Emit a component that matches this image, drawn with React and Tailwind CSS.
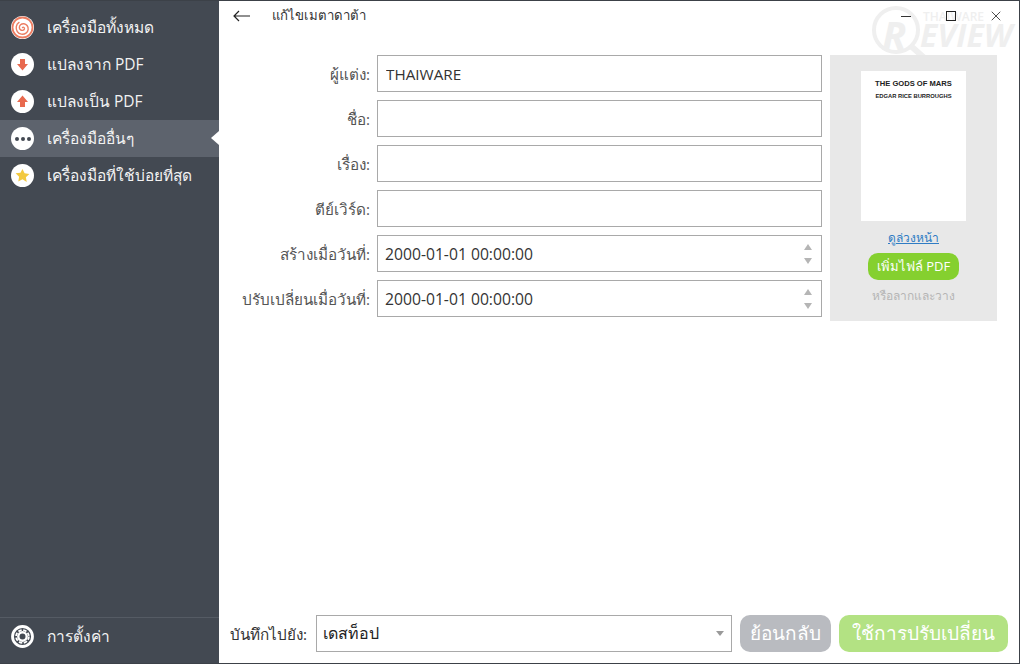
import { X } from "lucide-react";

const font = "font-['Open_Sans','Noto_Sans','Liberation_Sans',sans-serif]";

const CircleIcon = ({ children }) => (
  <span className="flex h-[23px] w-[23px] shrink-0 items-center justify-center rounded-full bg-white">
    {children}
  </span>
);

const menuItems = [
  {
    label: "เครื่องมือทั้งหมด",
    icon: (
      <span className="flex h-[23px] w-[23px] shrink-0 items-center justify-center rounded-full bg-white">
        <svg width="23" height="23" viewBox="0 0 23 23" fill="none" stroke="#ec7d62">
          <circle cx="11.5" cy="11.5" r="10" strokeWidth="1.800" />
          <path
            d="M11.500 11.500c.9-.9 2.300.2 1.900 1.500-.5 1.500-2.600 1.800-3.800.9-1.700-1.200-1.600-3.800-.1-5.100 2-1.700 5-1.300 6.600.7 1.900 2.400 1.300 5.900-1.100 7.600-2.800 2-6.800 1.300-8.700-1.500-2-3-1.300-7.200 1.700-9.200"
            strokeWidth="1.400"
            strokeLinecap="round"
          />
        </svg>
      </span>
    ),
  },
  {
    label: "แปลงจาก PDF",
    icon: (
      <CircleIcon>
        <svg width="13" height="13" viewBox="0 0 13 13" fill="#e8694e">
          <path d="M4 1h5v5h3l-5.500 6.500L1 6h3z" />
        </svg>
      </CircleIcon>
    ),
  },
  {
    label: "แปลงเป็น PDF",
    icon: (
      <CircleIcon>
        <svg width="13" height="13" viewBox="0 0 13 13" fill="#e8694e">
          <path d="M4 12h5V7h3L6.500.5 1 7h3z" />
        </svg>
      </CircleIcon>
    ),
  },
  {
    label: "เครื่องมืออื่นๆ",
    active: true,
    icon: (
      <CircleIcon>
        <span className="flex gap-[2px]">
          <span className="h-[4px] w-[4px] rounded-full bg-[#434952]" />
          <span className="h-[4px] w-[4px] rounded-full bg-[#434952]" />
          <span className="h-[4px] w-[4px] rounded-full bg-[#434952]" />
        </span>
      </CircleIcon>
    ),
  },
  {
    label: "เครื่องมือที่ใช้บ่อยที่สุด",
    icon: (
      <CircleIcon>
        <svg width="15" height="15" viewBox="0 0 24 24" fill="#f3c93f">
          <path d="M12 1.500l3.300 7 7.700 1-5.600 5.300 1.400 7.700L12 18l-6.800 3.500 1.400-7.700L1 8.500l7.700-1z" />
        </svg>
      </CircleIcon>
    ),
  },
];

const GearIcon = () => (
  <svg width="23" height="23" viewBox="0 0 23 23" fill="none" className="shrink-0">
    <circle cx="11.5" cy="11.5" r="10" stroke="#fff" strokeWidth="2.800" />
    <circle cx="11.5" cy="11.5" r="6.400" stroke="#fff" strokeWidth="1.800" strokeDasharray="3.400 1.620" />
    <circle cx="11.5" cy="11.5" r="4.200" stroke="#fff" strokeWidth="2.400" />
  </svg>
);

const TextRow = ({ label, value }) => (
  <div className="flex items-center">
    <label className="w-[150px] shrink-0 pt-[1px] text-right text-[15.25px] text-[#555]">{label}</label>
    <input
      readOnly
      value={value}
      className="ml-[7px] h-[37px] w-[445px] border border-[#a9a9a9] bg-white px-[8px] text-[15.25px] text-[#333] outline-none"
    />
  </div>
);

const DateRow = ({ label, value }) => (
  <div className="flex items-center">
    <label className="w-[150px] shrink-0 pt-[1px] text-right text-[15.25px] text-[#555]">{label}</label>
    <div className="ml-[7px] flex h-[37px] w-[445px] items-center justify-between border border-[#a9a9a9] bg-white pl-[7px] pr-[9px]">
      <span className="pt-[2px] text-[15.7px] text-[#333]">{value}</span>
      <span className="flex flex-col gap-[8px]">
        <span className="h-0 w-0 border-x-[4px] border-b-[6px] border-x-transparent border-b-[#b5b5b5]" />
        <span className="h-0 w-0 border-x-[4px] border-t-[6px] border-x-transparent border-t-[#b5b5b5]" />
      </span>
    </div>
  </div>
);

const Watermark = () => (
  <div className="pointer-events-none absolute left-[870px] top-[4px] h-[62px] w-[148px] text-[#efefef]">
    <svg width="66" height="62" viewBox="0 0 66 62" fill="none" stroke="currentColor" className="absolute left-0 top-0">
      <circle cx="26" cy="25" r="22" strokeWidth="4" />
      <path d="M42 42l17 15" strokeWidth="6" strokeLinecap="round" />
    </svg>
    <span className="absolute left-[12px] top-[10px] text-[40px] font-bold italic leading-[40px]">R</span>
    <span className="absolute left-[53px] top-[6px] text-[12px] font-semibold leading-[12px]">THAIWARE</span>
    <span className="absolute left-[50px] top-[14px] text-[32px] font-bold italic leading-[32px]">EVIEW</span>
  </div>
);

export default function App() {
  return (
    <div className={`${font} relative flex h-[664px] w-[1020px] overflow-hidden border-r border-b border-t border-[#3c4148] bg-white`}>
      <Watermark />

      {/* Sidebar */}
      <aside className="flex w-[219px] shrink-0 flex-col justify-between bg-[#434952]">
        <nav className="pt-[8px]">
          {menuItems.map((item) => (
            <div
              key={item.label}
              className={`relative flex h-[37px] items-center gap-[13px] pl-[11px] text-[15.5px] text-[#f2f2f2] ${
                item.active ? "bg-[#5d636d]" : ""
              }`}
            >
              {item.icon}
              <span>{item.label}</span>
              {item.active && (
                <span className="absolute right-0 top-[11px] h-0 w-0 border-y-[7px] border-r-[8px] border-y-transparent border-r-white" />
              )}
            </div>
          ))}
        </nav>
        <div className="flex h-[46px] items-center gap-[13px] border-t border-[#555b64] pb-[8px] pl-[11px] text-[15.5px] text-[#f2f2f2]">
          <GearIcon />
          <span>การตั้งค่า</span>
        </div>
      </aside>

      {/* Main */}
      <main className="relative flex min-w-0 flex-1 flex-col">
        <header className="flex h-[30px] items-center justify-between pl-[14px] pr-[15px]">
          <div className="flex items-center">
            <svg width="18" height="12" viewBox="0 0 18 12" fill="none" stroke="#222" strokeWidth="1.200">
              <path d="M17 6H1M6 1 1 6l5 5" />
            </svg>
            <h1 className="ml-[21px] text-[13.2px] font-normal text-[#333]">แก้ไขเมตาดาต้า</h1>
          </div>
          <div className="flex items-center">
            <span className="h-px w-[10px] bg-[#333]" />
            <span className="ml-[35px] h-[10px] w-[10px] border border-[#222]" />
            <X size={16} strokeWidth={1.2} className="ml-[32px] text-[#222]" />
          </div>
        </header>

        <div className="flex flex-1 pl-[1px] pt-[24px]">
          <div className="flex flex-col gap-[8px]">
            <TextRow label="ผู้แต่ง:" value="THAIWARE" />
            <TextRow label="ชื่อ:" value="" />
            <TextRow label="เรื่อง:" value="" />
            <TextRow label="ตีย์เวิร์ด:" value="" />
            <DateRow label="สร้างเมื่อวันที่:" value="2000-01-01 00:00:00" />
            <DateRow label="ปรับเปลี่ยนเมื่อวันที่:" value="2000-01-01 00:00:00" />
          </div>

          <div className="ml-[8px] flex h-[266px] w-[167px] flex-col items-center bg-[#e8e8e8] pt-[16px]">
            <div className="flex h-[150px] w-[105px] flex-col items-center bg-white pt-[8px] font-['Liberation_Sans',sans-serif] font-bold text-[#222]">
              <span className="text-[7.6px] leading-[10px]">THE GODS OF MARS</span>
              <span className="mt-[3px] text-[5.8px] leading-[8px]">EDGAR RICE BURROUGHS</span>
            </div>
            <a className="mt-[8px] text-[12px] leading-[18px] text-[#2f7cc4] underline">ดูล่วงหน้า</a>
            <button className="mt-[6px] h-[27px] w-[91px] rounded-[10px] bg-[#85d02f] text-[13px] text-white">
              เพิ่มไฟล์ PDF
            </button>
            <span className="mt-[7px] text-[12px] leading-[18px] text-[#b5b5b5]">หรือลากและวาง</span>
          </div>
        </div>

        {/* Bottom bar */}
        <footer className="flex h-[48px] items-start pl-[11px] pr-[11px]">
          <span className="mt-[8px] w-[79px] shrink-0 text-[15.25px] text-[#333]">บันทึกไปยัง:</span>
          <div className="ml-[7px] flex h-[37px] w-[416px] shrink-0 items-center justify-between border border-[#a9a9a9] pl-[6px] pr-[7px]">
            <span className="pb-[2px] text-[16px] text-[#222]">เดสท็อป</span>
            <span className="h-0 w-0 border-x-[4px] border-t-[5px] border-x-transparent border-t-[#9a9a9a]" />
          </div>
          <button className="ml-[8px] h-[37px] w-[91px] shrink-0 rounded-[10px] bg-[#b9bbc0] text-[19px] text-white">ย้อนกลับ</button>
          <button className="ml-[8px] h-[37px] w-[169px] shrink-0 rounded-[10px] bg-[#b3e283] text-[19px] text-white">ใช้การปรับเปลี่ยน</button>
        </footer>
      </main>
    </div>
  );
}
